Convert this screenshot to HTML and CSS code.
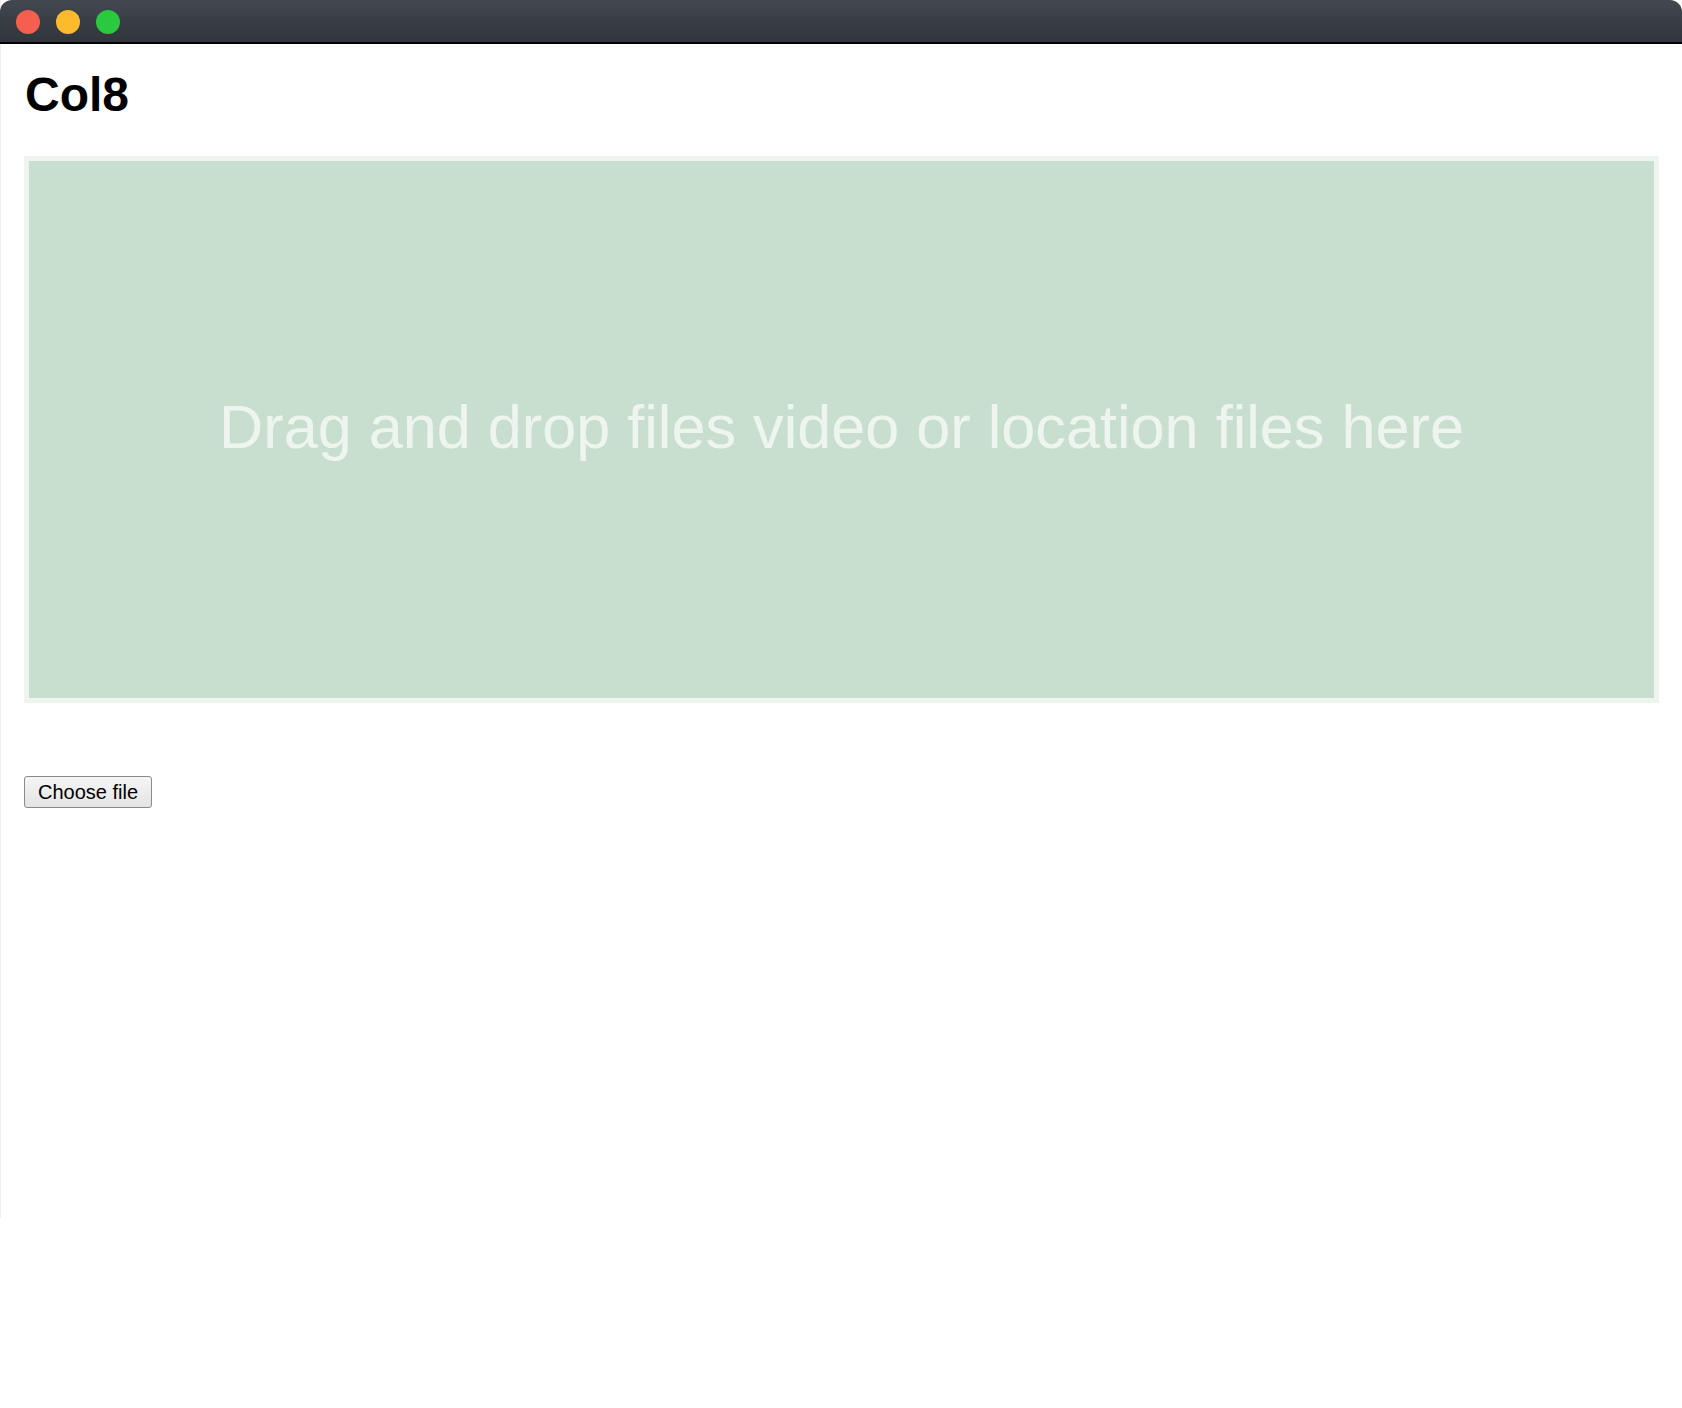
FILE: index.html
```html
<!DOCTYPE html>
<html>
<head>
<meta charset="utf-8">
<title>Col8</title>
<link rel="stylesheet" href="styles.css">
</head>
<body>
<div class="window">
  <div class="titlebar">
    <span class="light red"></span>
    <span class="light yellow"></span>
    <span class="light green"></span>
  </div>
  <div class="content">
    <h1 class="heading">Col8</h1>
    <div class="dropzone">
      <span class="drop-text">Drag and drop files video or location files here</span>
    </div>
    <div class="file-row">
      <button class="choose-btn" type="button">Choose file</button>
    </div>
  </div>
</div>
</body>
</html>
```

FILE: styles.css
```css
html, body {
  margin: 0;
  padding: 0;
  background: #ffffff;
}

body {
  font-family: "Liberation Sans", Arial, sans-serif;
  width: 1682px;
  height: 1408px;
  overflow: hidden;
}

.window {
  height: 1218px;
  display: flex;
  flex-direction: column;
  border-left: 1px solid #efefef;
  box-sizing: border-box;
}

.titlebar {
  height: 44px;
  flex-shrink: 0;
  box-sizing: border-box;
  padding-top: 1px;
  background: linear-gradient(#43474f, #30343b);
  border-bottom: 2px solid #000000;
  border-radius: 12px 12px 0 0;
  display: flex;
  align-items: center;
  gap: 16px;
  padding-left: 16px;
  margin-left: -1px;
}

.light {
  width: 24px;
  height: 24px;
  border-radius: 50%;
  display: block;
}

.red { background: #f45f4f; }
.yellow { background: #fcbb2d; }
.green { background: #29c940; }

.content {
  padding: 0 23px 0 23px;
  display: flex;
  flex-direction: column;
}

.heading {
  margin: 23px 0 0 1px;
  font-size: 48px;
  font-weight: bold;
  line-height: 55px;
  color: #000000;
}

.dropzone {
  margin-top: 34px;
  height: 547px;
  border: 5px solid #eef5ef;
  background: #c8dfcf;
  box-sizing: border-box;
  display: flex;
  align-items: center;
  justify-content: center;
}

.drop-text {
  font-size: 61.2px;
  color: #eef5ef;
  margin-top: -5px;
}

.file-row {
  margin-top: 73px;
}

.choose-btn {
  font-family: "Liberation Sans", Arial, sans-serif;
  font-size: 20px;
  height: 32px;
  padding: 0 13px;
  color: #000000;
  background: linear-gradient(#f6f6f6, #e3e3e3);
  border: 1px solid #8a8a8a;
  border-radius: 3px;
  line-height: 30px;
}
```
